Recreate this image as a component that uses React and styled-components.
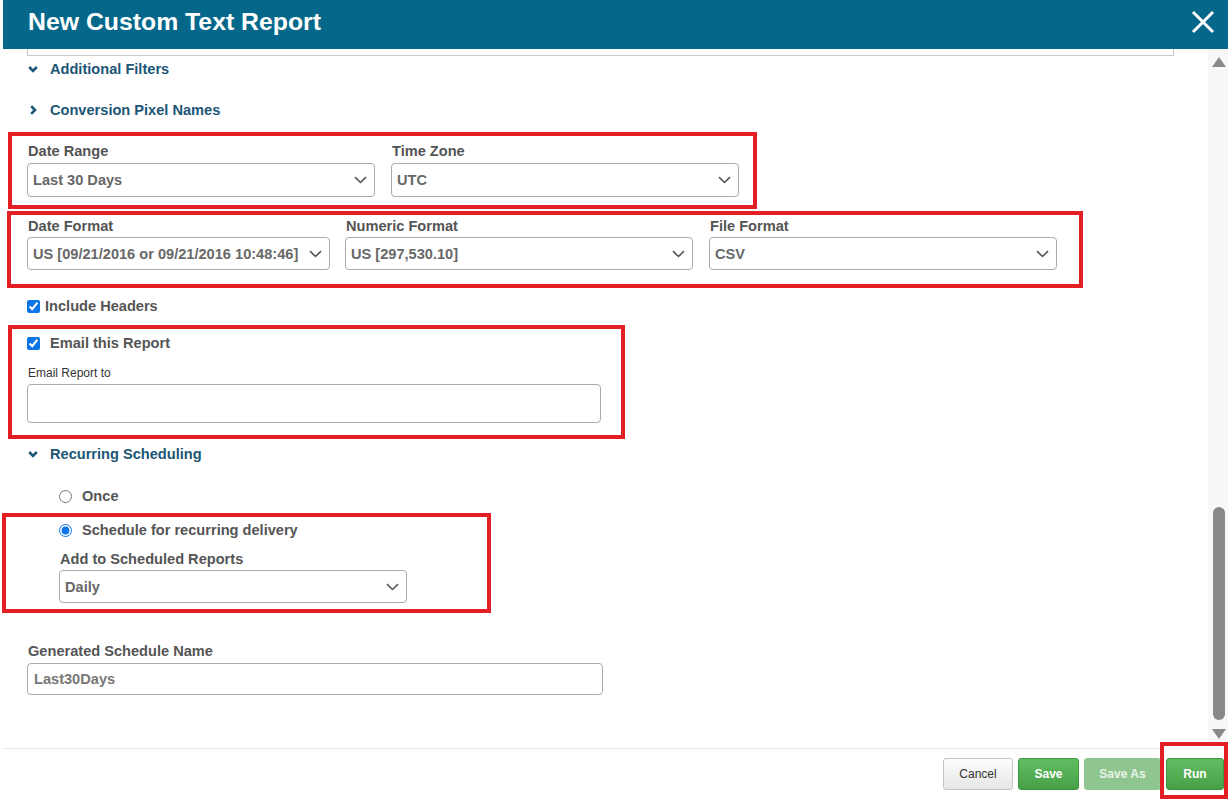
import React from 'react'
import styled, { createGlobalStyle } from 'styled-components'

const GlobalStyle = createGlobalStyle`
    html, body {
        margin: 0;
        padding: 0;
        background: #fff;
        font-family: "Liberation Sans", Arial, sans-serif;
    }
`

const Modal = styled.div`
    width: 1228px;
    height: 799px;
    display: flex;
    flex-direction: column;
    background: #fff;
    overflow: hidden;
`

const Header = styled.div`
    height: 49px;
    margin-left: 3px;
    background: #05688a;
    display: flex;
    align-items: center;
    justify-content: space-between;
    padding: 0 12px 0 25px;
    flex-shrink: 0;
`

const Title = styled.h1`
    margin: 0 0 6px 0;
    color: #fff;
    font-size: 24.8px;
    font-weight: bold;
`

const CloseButton = styled.button`
    border: none;
    background: none;
    padding: 0;
    width: 26px;
    height: 26px;
    margin-bottom: 6px;
    display: flex;
    align-items: center;
    justify-content: center;
    cursor: pointer;
`

const Main = styled.div`
    display: flex;
    height: 699px;
    flex-shrink: 0;
`

const Content = styled.div`
    flex: 1;
    overflow: hidden;
    display: flex;
    flex-direction: column;
    align-items: flex-start;
`

const ClippedBox = styled.div`
    margin-left: 27px;
    width: 1145px;
    height: 6px;
    border: 1px solid #c8c8c8;
    border-top: none;
    flex-shrink: 0;
`

const SectionToggle = styled.div`
    display: flex;
    align-items: center;
    height: 20px;
    margin-top: ${({ $top }) => $top}px;
    padding-left: 28px;
    color: #1b5675;
    font-size: 14.6px;
    font-weight: bold;
    gap: 12px;
`

const Highlight = styled.div`
    border: 4px solid #e41e25;
    margin-top: ${({ $top }) => $top}px;
    margin-left: ${({ $left }) => $left}px;
    width: ${({ $width }) => $width}px;
    padding: ${({ $pad }) => $pad};
    box-sizing: border-box;
    flex-shrink: 0;
`

const FieldRow = styled.div`
    display: flex;
    gap: ${({ $gap }) => $gap || 16}px;
`

const Field = styled.div`
    display: flex;
    flex-direction: column;
    width: ${({ $width }) => $width}px;
`

const Label = styled.label`
    display: block;
    color: #555;
    font-size: 14.6px;
    font-weight: bold;
    line-height: 16px;
    height: 16px;
    margin-left: 1px;
    margin-bottom: ${({ $gap }) => $gap}px;
    margin-top: ${({ $top }) => $top || 0}px;
`

const SelectBox = styled.div`
    height: ${({ $height }) => $height || 34}px;
    width: ${({ $width }) => ($width ? `${$width}px` : 'auto')};
    box-sizing: border-box;
    border: 1px solid #aaa;
    border-radius: 4px;
    display: flex;
    align-items: center;
    justify-content: space-between;
    padding: 0 7px 0 5px;
    color: #686868;
    font-size: 14.6px;
    font-weight: bold;
    background: #fff;
`

const CheckRow = styled.div`
    display: flex;
    align-items: center;
    height: 16px;
    margin-top: ${({ $top }) => $top}px;
    margin-left: ${({ $left }) => $left}px;
    color: #555;
    font-size: 14.6px;
    font-weight: bold;
    gap: ${({ $gap }) => $gap}px;
`

const Check = styled.input`
    width: 13px;
    height: 13px;
    margin: 0;
    accent-color: #0b75e6;
`

const SmallLabel = styled.div`
    color: #333;
    font-size: 12px;
    line-height: 14px;
    margin-top: 15px;
    margin-left: 1px;
`

const TextInput = styled.div`
    width: ${({ $width }) => $width}px;
    height: ${({ $height }) => $height}px;
    margin-top: ${({ $top }) => $top}px;
    box-sizing: border-box;
    border: 1px solid #aaa;
    border-radius: 4px;
    display: flex;
    align-items: center;
    padding-left: 6px;
    color: #777;
    font-size: 14.6px;
    font-weight: bold;
`

const Plain = styled.div`
    margin-top: ${({ $top }) => $top}px;
    margin-left: 27px;
    flex-shrink: 0;
`

const Scrollbar = styled.div`
    width: 20px;
    background: #f8f8f8;
    display: flex;
    flex-direction: column;
    align-items: center;
    padding-left: 1px;
    box-sizing: border-box;
`

const Arrow = styled.div`
    width: 0;
    height: 0;
    border-left: 7px solid transparent;
    border-right: 7px solid transparent;
    ${({ $down }) => ($down ? 'border-top: 10px solid #8a8a8a;' : 'border-bottom: 10px solid #8a8a8a;')}
    margin-top: ${({ $top }) => $top}px;
`

const Thumb = styled.div`
    width: 12px;
    height: 213px;
    border-radius: 6px;
    background: #888;
    margin-top: 440px;
`

const Footer = styled.div`
    height: 50px;
    border-top: 1px solid #e4e4e4;
    margin-left: 3px;
    display: flex;
    justify-content: flex-end;
    align-items: flex-start;
    gap: 5px;
    flex-shrink: 0;
`

const Button = styled.button`
    height: 32px;
    width: ${({ $width }) => $width}px;
    margin-top: ${({ $boxed }) => ($boxed ? 0 : 9)}px;
    border-radius: 3px;
    font-family: "Liberation Sans", Arial, sans-serif;
    font-size: 12px;
    cursor: pointer;
    padding: 0;
    ${({ $variant }) => {
        if ($variant === 'cancel') {
            return `
                background: linear-gradient(#fdfdfd, #e6e6e6);
                border: 1px solid #c4c4c4;
                color: #333;
            `
        }
        if ($variant === 'disabled') {
            return `
                background: #8fc68f;
                border: 1px solid #8fc68f;
                color: #e8f4e8;
                font-weight: bold;
            `
        }
        return `
            background: linear-gradient(#62bd62, #47a047);
            border: 1px solid #3f953f;
            color: #fff;
            font-weight: bold;
        `
    }}
`

const RunHighlight = styled.div`
    border: 4px solid #e41e25;
    margin-top: -7px;
    margin-left: -6px;
    padding: 12px 0 5px 2px;
    background: #fff;
    height: 57px;
    box-sizing: border-box;
`

const Chevron = ({ dir }) => (
    <svg width="10" height="10" viewBox="0 0 10 10">
        {dir === 'down' ? (
            <path d="M1.2 3 L5 6.8 L8.8 3" fill="none" stroke="#1b5675" strokeWidth="2.6" />
        ) : (
            <path d="M3.2 1.2 L7 5 L3.2 8.8" fill="none" stroke="#1b5675" strokeWidth="2.6" />
        )}
    </svg>
)

const SelectArrow = () => (
    <svg width="13" height="8" viewBox="0 0 13 8">
        <path d="M1 1.2 L6.5 6.5 L12 1.2" fill="none" stroke="#555" strokeWidth="1.6" />
    </svg>
)

const Select = ({ value, width, height }) => (
    <SelectBox $width={width} $height={height}>
        <span>{value}</span>
        <SelectArrow />
    </SelectBox>
)

function App() {
    return (
        <>
            <GlobalStyle />
            <Modal>
                <Header>
                    <Title>New Custom Text Report</Title>
                    <CloseButton aria-label="close">
                        <svg width="24" height="24" viewBox="0 0 24 24">
                            <path d="M2 2 L22 22 M22 2 L2 22" stroke="#fff" strokeWidth="3" />
                        </svg>
                    </CloseButton>
                </Header>

                <Main>
                    <Content>
                        <ClippedBox />

                        <SectionToggle $top={3}>
                            <Chevron dir="down" />
                            Additional Filters
                        </SectionToggle>
                        <SectionToggle $top={21}>
                            <Chevron dir="right" />
                            Conversion Pixel Names
                        </SectionToggle>

                        <Highlight $top={12} $left={8} $width={749} $pad="7px 0 8px 15px">
                            <FieldRow>
                                <Field $width={348}>
                                    <Label $gap={4}>Date Range</Label>
                                    <Select value="Last 30 Days" />
                                </Field>
                                <Field $width={348}>
                                    <Label $gap={4}>Time Zone</Label>
                                    <Select value="UTC" />
                                </Field>
                            </FieldRow>
                        </Highlight>

                        <Highlight $top={2} $left={7} $width={1076} $pad="3px 0 14px 16px">
                            <FieldRow $gap={15}>
                                <Field $width={303}>
                                    <Label $gap={3}>Date Format</Label>
                                    <Select value="US [09/21/2016 or 09/21/2016 10:48:46]" height={33} />
                                </Field>
                                <Field $width={348}>
                                    <Label $gap={3}>Numeric Format</Label>
                                    <Select value="US [297,530.10]" height={33} />
                                </Field>
                                <Field $width={348} style={{ marginLeft: 1 }}>
                                    <Label $gap={3}>File Format</Label>
                                    <Select value="CSV" height={33} />
                                </Field>
                            </FieldRow>
                        </Highlight>

                        <CheckRow $top={10} $left={27} $gap={5}>
                            <Check type="checkbox" defaultChecked />
                            Include Headers
                        </CheckRow>

                        <Highlight $top={11} $left={8} $width={617} $pad="6px 0 12px 15px">
                            <CheckRow $top={0} $left={0} $gap={10}>
                                <Check type="checkbox" defaultChecked />
                                Email this Report
                            </CheckRow>
                            <SmallLabel>Email Report to</SmallLabel>
                            <TextInput $width={574} $height={39} $top={4} />
                        </Highlight>

                        <SectionToggle $top={5}>
                            <Chevron dir="down" />
                            Recurring Scheduling
                        </SectionToggle>

                        <CheckRow $top={24} $left={59} $gap={10}>
                            <Check type="radio" name="schedule" />
                            Once
                        </CheckRow>

                        <Highlight $top={9} $left={2} $width={489} $pad="5px 0 6px 53px">
                            <CheckRow $top={0} $left={0} $gap={10}>
                                <Check type="radio" name="schedule" defaultChecked />
                                Schedule for recurring delivery
                            </CheckRow>
                            <Label $top={13} $gap={3}>Add to Scheduled Reports</Label>
                            <Select value="Daily" width={348} height={33} />
                        </Highlight>

                        <Plain $top={30}>
                            <Label $gap={4}>Generated Schedule Name</Label>
                            <TextInput $width={576} $height={32} $top={0}>Last30Days</TextInput>
                        </Plain>
                    </Content>

                    <Scrollbar>
                        <Arrow $top={8} />
                        <Thumb />
                        <Arrow $down $top={9} />
                    </Scrollbar>
                </Main>

                <Footer>
                    <Button $variant="cancel" $width={70}>Cancel</Button>
                    <Button $width={61}>Save</Button>
                    <Button $variant="disabled" $width={77}>Save As</Button>
                    <RunHighlight>
                        <Button $boxed $width={58}>Run</Button>
                    </RunHighlight>
                </Footer>
            </Modal>
        </>
    )
}

export default App
